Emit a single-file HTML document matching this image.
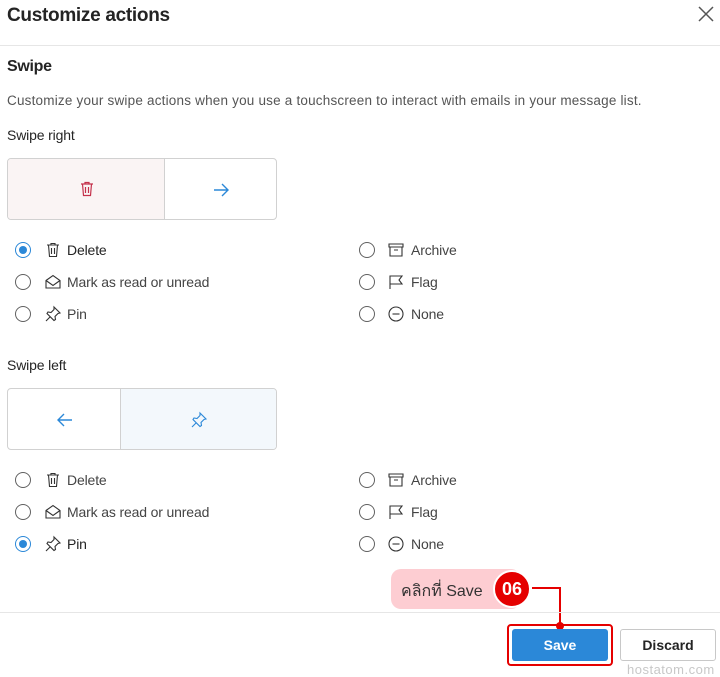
<!DOCTYPE html>
<html><head><meta charset="utf-8"><style>
*{margin:0;padding:0;box-sizing:border-box}
body{width:720px;height:677px;background:#fff;font-family:"Liberation Sans","Noto Sans CJK SC",sans-serif;color:#242424;position:relative;overflow:hidden}
.a{position:absolute;white-space:nowrap}
.t{font-size:14px;letter-spacing:-0.15px}
.r{position:absolute;width:16px;height:16px;border:1px solid #616161;border-radius:50%}
.r.on{border-color:#2b88d8}
.r.on::after{content:"";position:absolute;left:3px;top:3px;width:8px;height:8px;border-radius:50%;background:#2b88d8}
svg.i{position:absolute;width:18px;height:18px;fill:none;stroke:#333;stroke-width:1.1}
.box{position:absolute;left:7px;width:270px;height:62px;border:1px solid #d1d1d1;border-radius:4px;overflow:hidden}
</style></head><body>
<div class="a" style="left:7px;top:5px;font-size:19px;font-weight:bold;letter-spacing:-0.3px;color:#242424">Customize actions</div>
<svg class="a" style="left:697px;top:5px" width="18" height="18" viewBox="0 0 18 18"><path d="M2 2L16 16M16 2L2 16" stroke="#555" stroke-width="1.5"/></svg>
<div class="a" style="left:0;top:45px;width:720px;height:1px;background:#e6e6e6"></div>
<div class="a" style="left:7px;top:58px;font-size:16px;font-weight:bold;letter-spacing:-0.3px">Swipe</div>
<div class="a" style="left:7px;top:93px;font-size:13.5px;color:#555;letter-spacing:0.2px">Customize your swipe actions when you use a touchscreen to interact with emails in your message list.</div>
<div class="a t" style="left:7px;top:127px">Swipe right</div>

<div class="box" style="top:158px">
 <div class="a" style="left:0;top:0;width:157px;height:62px;background:#faf4f4;border-right:1px solid #d1d1d1"></div>
 <svg class="a" style="left:70px;top:21px" width="18" height="18" viewBox="0 0 18 18" fill="none" stroke="#c4314b" stroke-width="1.2"><path d="M3 4h12M7 4V2.5h4V4M4.5 4l1 11.5h7l1-11.5M7.5 7v6M10.5 7v6"/></svg>
 <svg class="a" style="left:204px;top:22px" width="18" height="18" viewBox="0 0 18 18" fill="none" stroke="#2b88d8" stroke-width="1.4"><path d="M2 9h14M10 3l6 6-6 6"/></svg>
</div>

<div class="box" style="top:388px">
 <div class="a" style="left:112px;top:0;width:158px;height:62px;background:#f3f8fc;border-left:1px solid #d1d1d1"></div>
 <svg class="a" style="left:48px;top:22px" width="18" height="18" viewBox="0 0 18 18" fill="none" stroke="#2b88d8" stroke-width="1.4"><path d="M16 9H2M8 3L2 9l6 6"/></svg>
 <svg class="a" style="left:182px;top:22px" width="18" height="18" viewBox="0 0 18 18" fill="none" stroke="#2b88d8" stroke-width="1.1"><path d="M10 2l6 6-2 .5-3 3 .5 3-1.5 1L3 8.5l1-1.5 3 .5 3-3z M6 12l-4 4"/></svg>
</div>

<div class="r on" style="left:15px;top:242px"></div>
<svg class="i" style="left:44px;top:241px" viewBox="0 0 18 18"><path d="M3 4h12M7 4V2.5h4V4M4.5 4l1 11.5h7l1-11.5M7.5 7v6M10.5 7v6"/></svg>
<div class="a t" style="left:67px;top:242px">Delete</div>
<div class="r" style="left:15px;top:274px"></div>
<svg class="i" style="left:44px;top:273px" viewBox="0 0 18 18"><path d="M2 7.5L9 2.5l7 5V15H2zM2 7.5l7 5 7-5"/></svg>
<div class="a t" style="left:67px;top:274px;color:#444">Mark as read or unread</div>
<div class="r" style="left:15px;top:306px"></div>
<svg class="i" style="left:44px;top:305px" viewBox="0 0 18 18"><path d="M10 2l6 6-2 .5-3 3 .5 3-1.5 1L3 8.5l1-1.5 3 .5 3-3z M6 12l-4 4"/></svg>
<div class="a t" style="left:67px;top:306px;color:#444">Pin</div>

<div class="r" style="left:359px;top:242px"></div>
<svg class="i" style="left:387px;top:241px" viewBox="0 0 18 18"><path d="M2 3h14v3H2zM3 6v9h12V6M7 9h4"/></svg>
<div class="a t" style="left:411px;top:242px;color:#444">Archive</div>
<div class="r" style="left:359px;top:274px"></div>
<svg class="i" style="left:387px;top:273px" viewBox="0 0 18 18"><path d="M3 16V3h12l-3 4 3 4H3"/></svg>
<div class="a t" style="left:411px;top:274px;color:#444">Flag</div>
<div class="r" style="left:359px;top:306px"></div>
<svg class="i" style="left:387px;top:305px" viewBox="0 0 18 18"><circle cx="9" cy="9" r="7"/><path d="M5.5 9h7"/></svg>
<div class="a t" style="left:411px;top:306px;color:#444">None</div>

<div class="a t" style="left:7px;top:357px">Swipe left</div>

<div class="r" style="left:15px;top:472px"></div>
<svg class="i" style="left:44px;top:471px" viewBox="0 0 18 18"><path d="M3 4h12M7 4V2.5h4V4M4.5 4l1 11.5h7l1-11.5M7.5 7v6M10.5 7v6"/></svg>
<div class="a t" style="left:67px;top:472px;color:#444">Delete</div>
<div class="r" style="left:15px;top:504px"></div>
<svg class="i" style="left:44px;top:503px" viewBox="0 0 18 18"><path d="M2 7.5L9 2.5l7 5V15H2zM2 7.5l7 5 7-5"/></svg>
<div class="a t" style="left:67px;top:504px;color:#444">Mark as read or unread</div>
<div class="r on" style="left:15px;top:536px"></div>
<svg class="i" style="left:44px;top:535px" viewBox="0 0 18 18"><path d="M10 2l6 6-2 .5-3 3 .5 3-1.5 1L3 8.5l1-1.5 3 .5 3-3z M6 12l-4 4"/></svg>
<div class="a t" style="left:67px;top:536px">Pin</div>

<div class="r" style="left:359px;top:472px"></div>
<svg class="i" style="left:387px;top:471px" viewBox="0 0 18 18"><path d="M2 3h14v3H2zM3 6v9h12V6M7 9h4"/></svg>
<div class="a t" style="left:411px;top:472px;color:#444">Archive</div>
<div class="r" style="left:359px;top:504px"></div>
<svg class="i" style="left:387px;top:503px" viewBox="0 0 18 18"><path d="M3 16V3h12l-3 4 3 4H3"/></svg>
<div class="a t" style="left:411px;top:504px;color:#444">Flag</div>
<div class="r" style="left:359px;top:536px"></div>
<svg class="i" style="left:387px;top:535px" viewBox="0 0 18 18"><circle cx="9" cy="9" r="7"/><path d="M5.5 9h7"/></svg>
<div class="a t" style="left:411px;top:536px;color:#444">None</div>

<div class="a" style="left:391px;top:569px;width:130px;height:40px;background:#fdcdd2;border-radius:10px"></div>
<div class="a" style="left:401px;top:579px;font-size:16px;color:#333">คลิกที่ Save</div>
<div class="a" style="left:493px;top:570px;width:38px;height:38px;border-radius:50%;background:#e50000;border:2px solid #fff;color:#fff;font-weight:bold;font-size:18px;text-align:center;line-height:34px">06</div>
<div class="a" style="left:532px;top:587px;width:29px;height:2px;background:#e50000"></div>
<div class="a" style="left:559px;top:587px;width:2px;height:38px;background:#e50000"></div>
<div class="a" style="left:556px;top:622px;width:8px;height:8px;border-radius:50%;background:#e50000"></div>

<div class="a" style="left:0;top:612px;width:720px;height:1px;background:#e6e6e6"></div>
<div class="a" style="left:507px;top:624px;width:106px;height:42px;border:2px solid #e50000;border-radius:4px"></div>
<div class="a" style="left:512px;top:629px;width:96px;height:32px;background:#2b88d8;border-radius:3px;color:#fff;font-weight:bold;font-size:14px;text-align:center;line-height:32px">Save</div>
<div class="a" style="left:620px;top:629px;width:96px;height:32px;border:1px solid #c8c8c8;border-radius:3px;font-weight:bold;font-size:14px;text-align:center;line-height:30px">Discard</div>
<div class="a" style="left:627px;top:662px;font-size:13px;color:#c8c8c8;letter-spacing:0.5px">hostatom.com</div>
</body></html>
